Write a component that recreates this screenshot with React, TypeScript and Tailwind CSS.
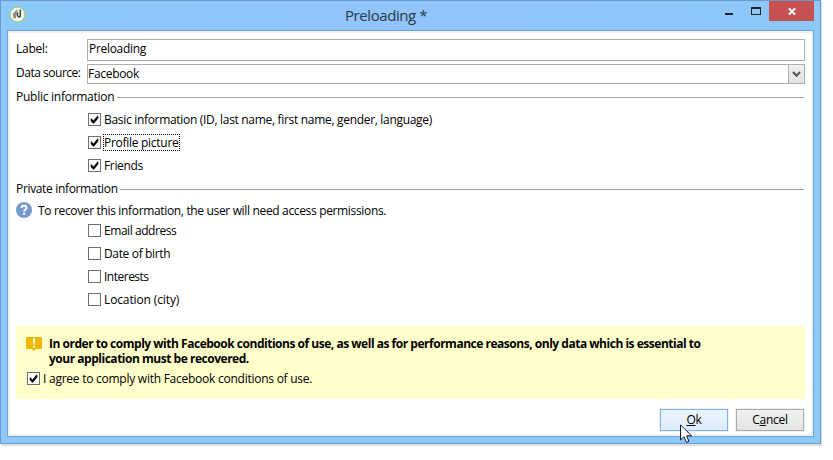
import type { ReactNode } from "react";

function Check({ checked = false }: { checked?: boolean }) {
  return (
    <span className="block h-[13px] w-[13px] shrink-0 border border-[#6f6f6f] bg-white">
      {checked && (
        <svg width="11" height="11" viewBox="0 0 11 11" className="block">
          <path d="M2 4.4 L4.5 6.8 L8.9 1.6 L9.2 4.1 L5 9.2 L4 9.2 L2 7 Z" fill="#000" stroke="#000" strokeWidth="0.5" />
        </svg>
      )}
    </span>
  );
}

interface OptionProps {
  checked?: boolean;
  focused?: boolean;
  tracking: string;
  children: ReactNode;
}

function Option({ checked, focused, tracking, children }: OptionProps) {
  return (
    <div className="flex h-[23px] items-start pl-[72px]">
      <Check checked={checked} />
      <span
        className={`whitespace-nowrap leading-[16px] ${tracking} ${
          focused ? "-mt-[2px] ml-[2px] h-[17px] w-[77px] border border-dotted border-black" : "-mt-[1px] ml-[3px]"
        }`}
      >
        {children}
      </span>
    </div>
  );
}

function Section({ tracking, children }: { tracking: string; children: ReactNode }) {
  return (
    <div className="flex h-[16px] items-center">
      <span className={`mt-[2px] leading-[16px] ${tracking}`}>{children}</span>
      <span className="mr-px mt-[2px] h-px flex-1 bg-[#a0a0a4]" />
    </div>
  );
}

export default function App() {
  return (
    <div className="h-[460px] w-[833px] overflow-hidden bg-white font-['Open_Sans','Noto_Sans',sans-serif] text-[12px] text-black">
      <div className="relative flex h-[444px] w-[821px] flex-col border border-[#6b9ac6] bg-[#8dc8fa] shadow-[1px_2px_0_#dcdfe4]">
        <header className="flex h-[29px] shrink-0 items-start bg-linear-to-r from-[#8cc8fa] via-[#92c4fc] to-[#8cc8fa]">
          <svg width="17" height="17" viewBox="0 0 17 17" className="ml-[8px] mt-[5px]">
            <circle cx="8.5" cy="8.5" r="7.5" fill="#f3f4f0" stroke="#a3c846" strokeWidth="1" />
            <path d="M4 7.2 L7 5.6 L8 7 L6.6 12.5 L4.4 12 Z" fill="#8b8d88" />
            <path d="M6.2 5.8 L8.6 4.4" fill="none" stroke="#777973" strokeWidth="1.2" />
            <path d="M11.2 3.5 V10.3 M8.8 6.5 C7.7 9 8.5 11.6 11.8 10.6" fill="none" stroke="#3f413d" strokeWidth="1.4" />
          </svg>
          <h1 className="ml-[319px] mt-[4px] text-[15px] leading-[20px] tracking-[-0.42px] text-[#293847]">Preloading *</h1>
          <div className="ml-auto mr-[6px] flex h-[20px]">
            <span className="mr-[18px] mt-[12px] h-[2px] w-[8px] bg-[#222]" />
            <span className="mr-[8px] mt-[6px] h-[8px] w-[10px] border border-t-2 border-[#222]" />
            <span className="flex w-[45px] items-center justify-center bg-[#c75050]">
              <svg width="8" height="7" viewBox="0 0 8 7" className="mt-[1px]">
                <path d="M0.8 0.3 L7.2 6.7 M7.2 0.3 L0.8 6.7" stroke="#fff" strokeWidth="2" />
              </svg>
            </span>
          </div>
        </header>

        <main className="mx-[6px] flex h-[407px] flex-col border border-[#6fa5d8] bg-white">
          <div className="flex h-[405px] flex-col border-2 border-[#f0f0f0] pl-[6px] pr-[6px]">
            <div className="mt-[6px] flex h-[22px]">
              <label className="mt-[2px] w-[71px] shrink-0 leading-[16px] tracking-[-0.25px]">Label:</label>
              <div className="w-[718px] shrink-0 border border-[#abadb3] pl-[1px] pt-px leading-[16px] tracking-[-0.3px]">Preloading</div>
            </div>
            <div className="mt-[3px] flex h-[20px]">
              <label className="mt-px w-[71px] shrink-0 whitespace-nowrap leading-[16px] tracking-[-0.48px]">Data source:</label>
              <div className="flex w-[718px] shrink-0 border border-[#abadb3]">
                <span className="mt-px flex-1 leading-[16px] tracking-[-0.3px]">Facebook</span>
                <span className="flex w-[16px] items-center justify-center border-l border-[#abadb3] bg-linear-to-b from-[#f0f0f0] to-[#e3e3e3]">
                  <svg width="9" height="7" viewBox="0 0 9 7">
                    <path d="M1 1 L4.5 4.7 L8 1" fill="none" stroke="#555" strokeWidth="2.1" />
                  </svg>
                </span>
              </div>
            </div>

            <div className="mt-[4px] grid">
              <Section tracking="w-[101px] tracking-[-0.26px]">Public information</Section>
            </div>
            <div className="mt-[9px]">
              <Option checked tracking="tracking-[-0.31px]">Basic information (ID, last name, first name, gender, language)</Option>
              <Option checked focused tracking="tracking-[-0.28px]">Profile picture</Option>
              <Option checked tracking="tracking-[-0.35px]">Friends</Option>
            </div>
            <div className="-mt-[2px] grid">
              <Section tracking="w-[104px] tracking-[-0.34px]">Private information</Section>
            </div>
            <div className="mt-[6px] flex h-[16px]">
              <svg width="16" height="16" viewBox="0 0 16 16">
                <circle cx="8" cy="8" r="8" fill="#7799cb" />
                <path d="M5.5 6 C5.5 2.9 10.5 2.9 10.5 6 C10.5 7.7 8.1 7.6 8.1 9.8" fill="none" stroke="#fff" strokeWidth="1.9" />
                <rect x="7.1" y="10.8" width="2" height="2" fill="#fff" />
              </svg>
              <span className="ml-[6px] mt-px leading-[16px] tracking-[-0.34px]">To recover this information, the user will need access permissions.</span>
            </div>
            <div className="mt-[6px]">
              <Option tracking="tracking-[-0.45px]">Email address</Option>
              <Option tracking="tracking-[-0.35px]">Date of birth</Option>
              <Option tracking="tracking-[-0.5px]">Interests</Option>
              <Option tracking="tracking-[-0.12px]">Location (city)</Option>
            </div>

            <section className="mt-[10px] h-[73px] w-[789px] bg-[#ffffcb] pl-[10px]">
              <div className="flex pt-[10px]">
                <svg width="16" height="15" viewBox="0 0 16 15" className="mt-px">
                  <path d="M1 0 H15 Q16 0 16 1 V11 Q16 12 15 12 H10 L8 14 L6 12 H1 Q0 12 0 11 V1 Q0 0 1 0 Z" fill="#efb800" />
                  <path d="M6.8 1.5 H9.2 L8.8 7.5 H7.2 Z M7 8.8 H9 V10.8 H7 Z" fill="#fffbe0" />
                </svg>
                <p className="ml-[7px] whitespace-nowrap font-bold leading-[15px] tracking-[-0.48px]">
                  In order to comply with Facebook conditions of use, as well as for performance reasons, only data which is essential to
                  <br />
                  your application must be recovered.
                </p>
              </div>
              <div className="mt-[6px] flex pl-px">
                <Check checked />
                <span className="-mt-px ml-[3px] leading-[16px] tracking-[-0.25px]">I agree to comply with Facebook conditions of use.</span>
              </div>
            </section>

            <footer className="mr-px mt-[10px] flex h-[22px] justify-end gap-[8px]">
              <button className="w-[68px] border border-[#7eb4ea] bg-linear-to-b from-[#ecf4fc] to-[#dcecfc] leading-[20px] tracking-[-0.3px] shadow-[0_0_0_1px_#f0f0f0]">
                <u>O</u>k
              </button>
              <button className="w-[68px] border border-[#acacac] bg-linear-to-b from-[#f0f0f0] to-[#e5e5e5] leading-[20px] tracking-[-0.25px] shadow-[0_0_0_1px_#f0f0f0]">
                C<u>a</u>ncel
              </button>
            </footer>
          </div>
        </main>
        <svg width="13" height="20" viewBox="0 0 13 20" className="absolute left-[679px] top-[423px]">
          <path d="M0.5 0.8 V16 L4 12.7 L6.5 18.4 L9 17.3 L6.5 11.8 H11.5 Z" fill="#fff" stroke="#111827" strokeWidth="1" />
        </svg>
      </div>
    </div>
  );
}
